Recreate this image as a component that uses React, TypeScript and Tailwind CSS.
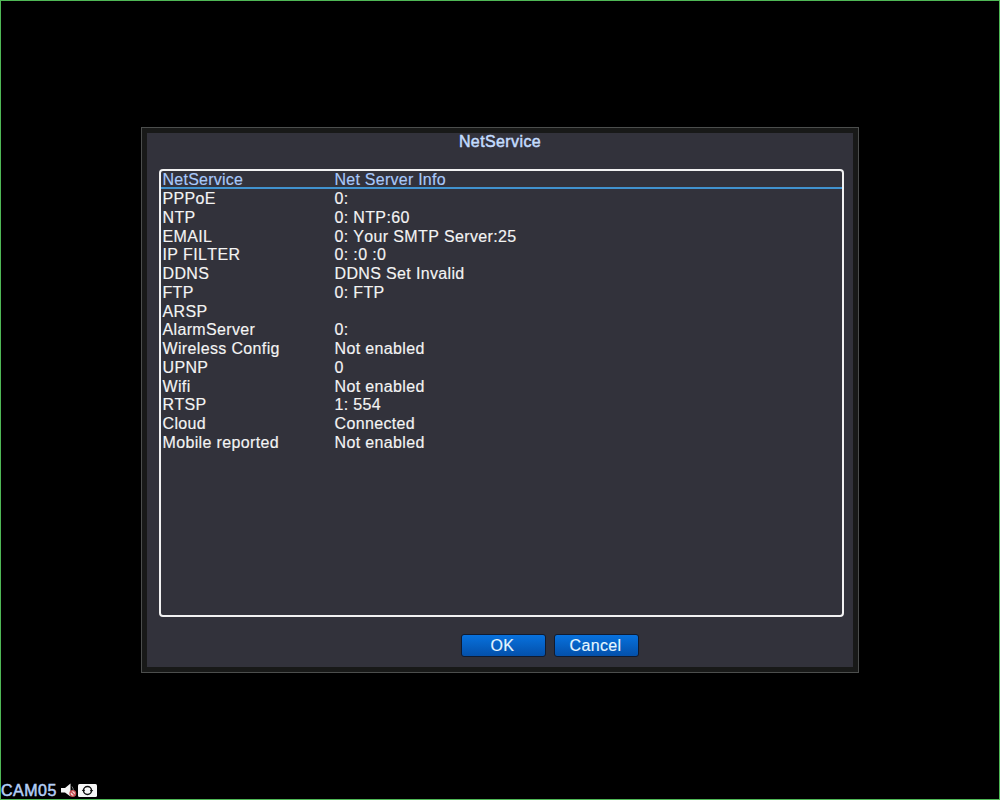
const services = [
  { name: "PPPoE", info: "0:" },
  { name: "NTP", info: "0: NTP:60" },
  { name: "EMAIL", info: "0: Your SMTP Server:25" },
  { name: "IP FILTER", info: "0: :0 :0" },
  { name: "DDNS", info: "DDNS Set Invalid" },
  { name: "FTP", info: "0: FTP" },
  { name: "ARSP", info: "" },
  { name: "AlarmServer", info: "0:" },
  { name: "Wireless Config", info: "Not enabled" },
  { name: "UPNP", info: "0" },
  { name: "Wifi", info: "Not enabled" },
  { name: "RTSP", info: "1: 554" },
  { name: "Cloud", info: "Connected" },
  { name: "Mobile reported", info: "Not enabled" },
];

export default function App() {
  return (
    <div className="flex h-[800px] w-[1000px] flex-col overflow-hidden border border-[#4fb856] bg-black font-['Liberation_Sans',Arial,sans-serif] text-[16px] text-[#f4f4f4]">
      <div className="mx-auto mt-[126px] h-[546px] w-[718px] shrink-0 border border-[#4c4e4d] bg-[#181918] p-[5px]">
        <div className="flex h-full flex-col bg-[#32323b] px-3">
          <h1 className="h-9 text-center text-[16px] leading-[17px] font-normal tracking-[0.4px] text-[#c3dcff] [-webkit-text-stroke:0.5px_#c3dcff]">
            NetService
          </h1>
          <ServiceTable />
          <div className="mt-[17px] ml-[302px] flex gap-2">
            <DialogButton label="OK" />
            <DialogButton label="Cancel" />
          </div>
        </div>
      </div>
      <StatusBar />
    </div>
  );
}

function ServiceTable() {
  return (
    <div className="h-[448px] w-[685px] shrink-0 rounded-[4px] border-2 border-[#f2f2f2] tracking-[0.35px] [-webkit-text-stroke:0.15px] [font-kerning:none]">
      <div className="grid h-[18px] grid-cols-[172px_1fr] border-b-2 border-[#4193cf] pl-[1.5px] leading-[18px] tracking-[0.25px] text-[#a9c9fa]">
        <span>NetService</span>
        <span>Net Server Info</span>
      </div>
      {services.map((row) => (
        <div key={row.name} className="grid h-[18.75px] grid-cols-[172px_1fr] pl-[1.5px] leading-[19px]">
          <span>{row.name}</span>
          <span>{row.info}</span>
        </div>
      ))}
    </div>
  );
}

function DialogButton({ label }: { label: string }) {
  return (
    <button className="h-[23px] w-[85px] rounded-[3px] border border-[#101b30] bg-linear-to-b from-[#0872de] to-[#0450aa] pr-[2px] text-center leading-[21px] tracking-[0.35px] text-[#e4f6ff] [-webkit-text-stroke:0.15px]">
      {label}
    </button>
  );
}

function StatusBar() {
  return (
    <div className="mt-auto flex h-[17px] items-center">
      <span className="text-[16px] leading-[17px] tracking-[0.5px] text-[#b4cff8] [-webkit-text-stroke:0.5px_#b4cff8]">
        CAM05
      </span>
      <MutedIcon />
      <RecordIcon />
    </div>
  );
}

function MutedIcon() {
  return (
    <svg width="17" height="15" viewBox="0 0 17 15" className="ml-1">
      <path d="M0 5h4L9.5.5v13L4 9.5H0z" fill="#f5f5f5" />
      <path d="M11 3.5q2 2.5 1 5" fill="none" stroke="#777" />
      <circle cx="11.8" cy="10.5" r="2.8" fill="#f3dada" stroke="#c94d50" strokeWidth="1.3" />
      <path d="m10 8.5 4 4" stroke="#c94d50" strokeWidth="1.3" />
    </svg>
  );
}

function RecordIcon() {
  return (
    <svg width="19" height="13" viewBox="0 0 19 13">
      <rect width="19" height="13" rx="1.5" fill="#f7f7f7" />
      <circle cx="9.5" cy="6.5" r="4" fill="none" stroke="#111" strokeWidth="1.5" />
      <path d="M3.8 7 5.5 4.8 7.2 7zM11.8 6h3.4l-1.7 2.2z" fill="#111" />
    </svg>
  );
}
